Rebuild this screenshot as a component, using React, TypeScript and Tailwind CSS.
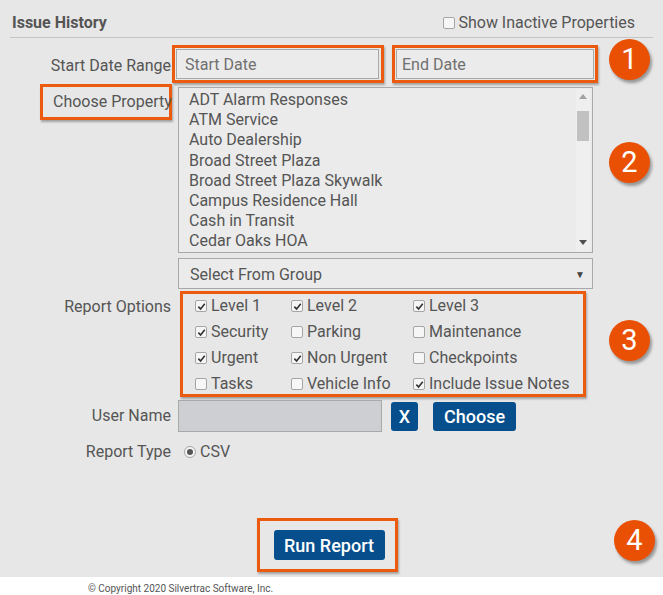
import { ReactNode } from 'react';

const ORANGE = 'border-[#ec5a0d]';

const properties = [
  'ADT Alarm Responses',
  'ATM Service',
  'Auto Dealership',
  'Broad Street Plaza',
  'Broad Street Plaza Skywalk',
  'Campus Residence Hall',
  'Cash in Transit',
  'Cedar Oaks HOA',
];

const options: [string, boolean][] = [
  ['Level 1', true],
  ['Level 2', true],
  ['Level 3', true],
  ['Security', true],
  ['Parking', false],
  ['Maintenance', false],
  ['Urgent', true],
  ['Non Urgent', true],
  ['Checkpoints', false],
  ['Tasks', false],
  ['Vehicle Info', false],
  ['Include Issue Notes', true],
];

function Check({ on }: { on: boolean }) {
  return (
    <span className="inline-flex h-[12px] w-[12px] shrink-0 items-center justify-center rounded-[2px] border border-[#a5a5a5] bg-[#f6f6f6]">
      {on && (
        <svg viewBox="0 0 10 10" className="h-[9px] w-[9px]">
          <path d="M1.5 5.2 L4 7.8 L8.6 2" fill="none" stroke="#333" strokeWidth="1.8" />
        </svg>
      )}
    </span>
  );
}

function Badge({ n, top, left }: { n: number; top: number; left: number }) {
  return (
    <div
      className="absolute flex h-[41px] w-[41px] items-center justify-center rounded-full bg-[#ea5004] text-[29px] leading-none text-white shadow-[2px_3px_3px_rgba(0,0,0,0.35)]"
      style={{ top, left }}
    >
      {n}
    </div>
  );
}

function Label({ children, className = '' }: { children: ReactNode; className?: string }) {
  return <div className={`w-[172px] shrink-0 pr-[1px] text-right ${className}`}>{children}</div>;
}

export default function App() {
  return (
    <div className="relative w-[663px] font-['Roboto',sans-serif] text-[16px] text-[#555]">
      <div className="h-[577px] bg-[#e7e7e7]">
        <div className="mx-[10px] flex h-[38px] items-center justify-between border-b border-[#c4c4c4] pl-[2px] pr-[18px] pt-[9px]">
          <span className="font-bold">Issue History</span>
          <span className="flex items-center gap-[3px]">
            <Check on={false} />
            Show Inactive Properties
          </span>
        </div>

        <div className="mt-[7px] flex h-[38px] items-center">
          <Label className="pt-[4px]">Start Date Range</Label>
          <div className={`h-[38px] w-[212px] border-[3px] ${ORANGE} p-[1px] pr-[2px] shadow-[1px_2px_2px_rgba(0,0,0,0.3)]`}>
            <div className="flex h-full items-center border border-[#a9a9a9] bg-[#ebebeb] pl-[8px] pt-[2px] text-[#707070]">
              Start Date
            </div>
          </div>
          <div className={`ml-[8px] h-[38px] w-[206px] border-[3px] ${ORANGE} p-[1px] shadow-[1px_2px_2px_rgba(0,0,0,0.3)]`}>
            <div className="flex h-full items-center border border-[#a9a9a9] bg-[#ebebeb] pl-[5px] pt-[2px] text-[#707070]">
              End Date
            </div>
          </div>
        </div>

        <div className="flex">
          <div className="flex w-[172px] shrink-0 justify-end">
            <div className={`mt-[1px] flex h-[36px] w-[132px] items-center whitespace-nowrap border-[3px] ${ORANGE} pl-[10px] shadow-[1px_2px_2px_rgba(0,0,0,0.3)]`}>
              Choose Property
            </div>
          </div>
          <div className="ml-[6px] mt-[4px] flex h-[166px] w-[415px] border border-[#a9a9a9] bg-[#ebebeb]">
            <div className="flex-1 pl-[10px] pt-[2px] text-[16px] leading-[20.2px]">
              {properties.map((p) => (
                <div key={p}>{p}</div>
              ))}
            </div>
            <div className="relative my-[1px] mr-[2px] w-[14px] bg-[#efefef]">
              <svg viewBox="0 0 10 6" className="absolute left-[3px] top-[5px] h-[5px] w-[8px]">
                <path d="M0 6 L5 0 L10 6 Z" fill="#a3a3a3" />
              </svg>
              <div className="absolute left-[1px] top-[22px] h-[30px] w-[12px] bg-[#c1c1c1]" />
              <svg viewBox="0 0 10 6" className="absolute bottom-[6px] left-[3px] h-[5px] w-[8px]">
                <path d="M0 0 L5 6 L10 0 Z" fill="#505050" />
              </svg>
            </div>
          </div>
        </div>

        <div className="ml-[178px] mt-[5px] flex h-[31px] w-[415px] items-center justify-between border border-[#a9a9a9] bg-[#ebebeb] pl-[11px] pr-[7px] pt-[2px]">
          <span>Select From Group</span>
          <span className="text-[10px] text-[#444]">▼</span>
        </div>

        <div className="mt-[2px] flex">
          <div className="w-[172px] shrink-0 pr-[1px] pt-[4px] text-right">Report Options</div>
          <div className={`ml-[8px] h-[106px] w-[406px] border-[3px] ${ORANGE} pl-[12px] shadow-[1px_2px_2px_rgba(0,0,0,0.3)]`}>
            <div className="-mt-[1px] grid grid-cols-[96px_122px_1fr]">
              {options.map(([name, on]) => (
                <div key={name} className="flex h-[26px] items-center gap-[4px]">
                  <Check on={on} />
                  {name}
                </div>
              ))}
            </div>
          </div>
        </div>

        <div className="mt-[3px] flex h-[32px] items-center">
          <Label>User Name</Label>
          <div className="ml-[6px] h-[32px] w-[204px] border border-[#a9a9a9] bg-[#cdcfd2]" />
          <button className="ml-[9px] h-[29px] w-[27px] rounded-[3px] bg-[#064f8c] text-[18px] font-medium text-white">X</button>
          <button className="ml-[15px] h-[29px] w-[83px] rounded-[3px] bg-[#064f8c] text-[18px] font-medium text-white">Choose</button>
        </div>

        <div className="mt-[8px] flex h-[24px] items-center">
          <Label>Report Type</Label>
          <span className="ml-[12px] flex h-[12px] w-[12px] items-center justify-center rounded-full border border-[#a5a5a5] bg-[#f6f6f6]">
            <span className="h-[6px] w-[6px] rounded-full bg-[#555]" />
          </span>
          <span className="ml-[4px]">CSV</span>
        </div>

        <div className={`ml-[257px] mt-[54px] flex h-[54px] w-[141px] items-center justify-center border-[3px] ${ORANGE} shadow-[1px_2px_2px_rgba(0,0,0,0.3)]`}>
          <button className="ml-[3px] h-[30px] w-[111px] rounded-[3px] bg-[#064f8c] text-[18px] font-medium text-white">
            Run Report
          </button>
        </div>
      </div>
      <div className="h-[18px] bg-white pl-[88px] pt-[6px] text-[10px] leading-[12px] text-[#555]">
        © Copyright 2020 Silvertrac Software, Inc.
      </div>

      <Badge n={1} top={39} left={609} />
      <Badge n={2} top={142} left={609} />
      <Badge n={3} top={320} left={609} />
      <Badge n={4} top={520} left={614} />
    </div>
  );
}
